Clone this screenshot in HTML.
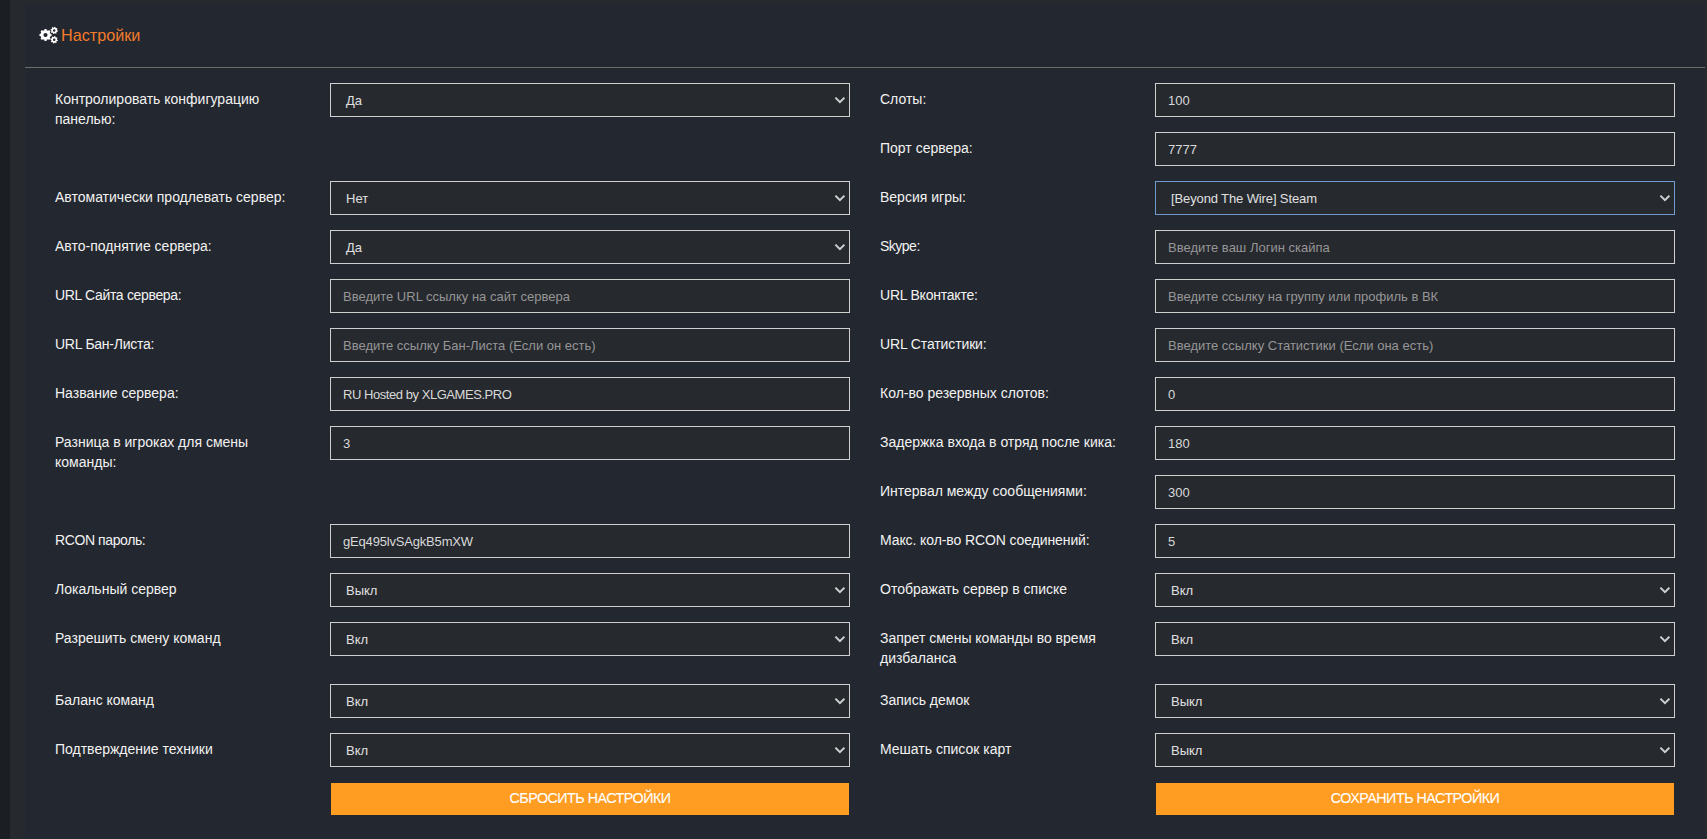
<!DOCTYPE html>
<html><head><meta charset="utf-8"><style>
html,body{margin:0;padding:0}
body{width:1707px;height:839px;background:#1b1e22;position:relative;overflow:hidden;font-family:"Liberation Sans",sans-serif}
.outer{position:absolute;left:10px;top:0;width:1697px;height:839px;background:#26292e}
.card{position:absolute;left:25px;top:5px;width:1680px;height:834px;background:#23272f}
.hr{position:absolute;left:25px;top:67px;width:1680px;height:1px;background:#6a6a6a}
.title{position:absolute;left:61px;top:26px;font-size:16.2px;line-height:18px;color:#f47b2b;white-space:nowrap}
.gear{position:absolute;left:36px;top:24px}
.lab{position:absolute;font-size:14px;line-height:20px;color:#f2f2f2;white-space:nowrap}
.ctl{position:absolute;width:518px;height:32px;border:1px solid #cfcfcf;background:#26292e;white-space:nowrap}
.ctl .t{position:absolute;top:9px;font-size:13px;line-height:16px}
.val .t{left:12px;color:#d9d9d9}
.ph .t{left:12px;color:#969696}
.sel .t{left:15px;color:#e0e0e0}
.focus{border-color:#6e9bcb}
.chev{position:absolute;left:503px;top:12px}
.btn{position:absolute;width:518px;height:32px;background:#ff9d22;color:#fff;font-size:14.3px;letter-spacing:-0.5px;line-height:30px;-webkit-text-stroke:0.1px #fff;text-align:center;white-space:nowrap}
</style></head><body>
<div class="outer"></div>
<div class="card"></div>
<div class="hr"></div>
<svg class="gear" width="26" height="22" viewBox="0 0 26 22"><path fill-rule="evenodd" fill="#fff" d="M14.35 9.79 L15.52 10.05 L15.52 11.95 L14.35 12.21 L13.79 13.57 L14.44 14.59 L13.09 15.94 L12.07 15.29 L10.71 15.85 L10.45 17.02 L8.55 17.02 L8.29 15.85 L6.93 15.29 L5.91 15.94 L4.56 14.59 L5.21 13.57 L4.65 12.21 L3.48 11.95 L3.48 10.05 L4.65 9.79 L5.21 8.43 L4.56 7.41 L5.91 6.06 L6.93 6.71 L8.29 6.15 L8.55 4.98 L10.45 4.98 L10.71 6.15 L12.07 6.71 L13.09 6.06 L14.44 7.41 L13.79 8.43ZM11.60 11.00 A2.1 2.1 0 1 0 7.40 11.00 A2.1 2.1 0 1 0 11.60 11.00ZM21.10 6.27 L21.90 6.56 L21.67 7.69 L20.82 7.65 L20.34 8.36 L20.70 9.13 L19.74 9.77 L19.17 9.13 L18.33 9.30 L18.04 10.10 L16.91 9.87 L16.95 9.02 L16.24 8.54 L15.47 8.90 L14.83 7.94 L15.47 7.37 L15.30 6.53 L14.50 6.24 L14.73 5.11 L15.58 5.15 L16.06 4.44 L15.70 3.67 L16.66 3.03 L17.23 3.67 L18.07 3.50 L18.36 2.70 L19.49 2.93 L19.45 3.78 L20.16 4.26 L20.93 3.90 L21.57 4.86 L20.93 5.43ZM19.45 6.40 A1.25 1.25 0 1 0 16.95 6.40 A1.25 1.25 0 1 0 19.45 6.40ZM21.10 15.67 L21.90 15.96 L21.67 17.09 L20.82 17.05 L20.34 17.76 L20.70 18.53 L19.74 19.17 L19.17 18.53 L18.33 18.70 L18.04 19.50 L16.91 19.27 L16.95 18.42 L16.24 17.94 L15.47 18.30 L14.83 17.34 L15.47 16.77 L15.30 15.93 L14.50 15.64 L14.73 14.51 L15.58 14.55 L16.06 13.84 L15.70 13.07 L16.66 12.43 L17.23 13.07 L18.07 12.90 L18.36 12.10 L19.49 12.33 L19.45 13.18 L20.16 13.66 L20.93 13.30 L21.57 14.26 L20.93 14.83ZM19.45 15.80 A1.25 1.25 0 1 0 16.95 15.80 A1.25 1.25 0 1 0 19.45 15.80Z"/></svg>
<div class="title">Настройки</div>
<div class="lab" style="left:55px;top:89px">Контролировать конфигурацию<br>панелью:</div><div class="ctl sel" style="left:330px;top:83px"><span class="t">Да</span><svg class="chev" width="11" height="8" viewBox="0 0 11 8"><path d="M1.4 1.6 L5.9 6.1 L10.4 1.6" fill="none" stroke="#cfcfcf" stroke-width="2"/></svg></div><div class="lab" style="left:55px;top:187px">Автоматически продлевать сервер:</div><div class="ctl sel" style="left:330px;top:181px"><span class="t">Нет</span><svg class="chev" width="11" height="8" viewBox="0 0 11 8"><path d="M1.4 1.6 L5.9 6.1 L10.4 1.6" fill="none" stroke="#cfcfcf" stroke-width="2"/></svg></div><div class="lab" style="left:55px;top:236px">Авто-поднятие сервера:</div><div class="ctl sel" style="left:330px;top:230px"><span class="t">Да</span><svg class="chev" width="11" height="8" viewBox="0 0 11 8"><path d="M1.4 1.6 L5.9 6.1 L10.4 1.6" fill="none" stroke="#cfcfcf" stroke-width="2"/></svg></div><div class="lab" style="left:55px;top:285px;letter-spacing:-0.33px">URL Сайта сервера:</div><div class="ctl ph" style="left:330px;top:279px"><span class="t">Введите URL ссылку на сайт сервера</span></div><div class="lab" style="left:55px;top:334px;letter-spacing:-0.25px">URL Бан-Листа:</div><div class="ctl ph" style="left:330px;top:328px"><span class="t">Введите ссылку Бан-Листа (Если он есть)</span></div><div class="lab" style="left:55px;top:383px">Название сервера:</div><div class="ctl val" style="left:330px;top:377px"><span class="t" style="letter-spacing:-0.45px">RU Hosted by XLGAMES.PRO</span></div><div class="lab" style="left:55px;top:432px">Разница в игроках для смены<br>команды:</div><div class="ctl val" style="left:330px;top:426px"><span class="t">3</span></div><div class="lab" style="left:55px;top:530px;letter-spacing:-0.4px">RCON пароль:</div><div class="ctl val" style="left:330px;top:524px"><span class="t" style="letter-spacing:-0.18px">gEq495lvSAgkB5mXW</span></div><div class="lab" style="left:55px;top:579px">Локальный сервер</div><div class="ctl sel" style="left:330px;top:573px"><span class="t">Выкл</span><svg class="chev" width="11" height="8" viewBox="0 0 11 8"><path d="M1.4 1.6 L5.9 6.1 L10.4 1.6" fill="none" stroke="#cfcfcf" stroke-width="2"/></svg></div><div class="lab" style="left:55px;top:628px">Разрешить смену команд</div><div class="ctl sel" style="left:330px;top:622px"><span class="t">Вкл</span><svg class="chev" width="11" height="8" viewBox="0 0 11 8"><path d="M1.4 1.6 L5.9 6.1 L10.4 1.6" fill="none" stroke="#cfcfcf" stroke-width="2"/></svg></div><div class="lab" style="left:55px;top:690px">Баланс команд</div><div class="ctl sel" style="left:330px;top:684px"><span class="t">Вкл</span><svg class="chev" width="11" height="8" viewBox="0 0 11 8"><path d="M1.4 1.6 L5.9 6.1 L10.4 1.6" fill="none" stroke="#cfcfcf" stroke-width="2"/></svg></div><div class="lab" style="left:55px;top:739px">Подтверждение техники</div><div class="ctl sel" style="left:330px;top:733px"><span class="t">Вкл</span><svg class="chev" width="11" height="8" viewBox="0 0 11 8"><path d="M1.4 1.6 L5.9 6.1 L10.4 1.6" fill="none" stroke="#cfcfcf" stroke-width="2"/></svg></div><div class="lab" style="left:880px;top:89px">Слоты:</div><div class="ctl val" style="left:1155px;top:83px"><span class="t">100</span></div><div class="lab" style="left:880px;top:138px">Порт сервера:</div><div class="ctl val" style="left:1155px;top:132px"><span class="t">7777</span></div><div class="lab" style="left:880px;top:187px">Версия игры:</div><div class="ctl sel focus" style="left:1155px;top:181px"><span class="t" style="letter-spacing:-0.12px">[Beyond The Wire] Steam</span><svg class="chev" width="11" height="8" viewBox="0 0 11 8"><path d="M1.4 1.6 L5.9 6.1 L10.4 1.6" fill="none" stroke="#cfcfcf" stroke-width="2"/></svg></div><div class="lab" style="left:880px;top:236px;letter-spacing:-0.5px">Skype:</div><div class="ctl ph" style="left:1155px;top:230px"><span class="t">Введите ваш Логин скайпа</span></div><div class="lab" style="left:880px;top:285px;letter-spacing:-0.22px">URL Вконтакте:</div><div class="ctl ph" style="left:1155px;top:279px"><span class="t">Введите ссылку на группу или профиль в ВК</span></div><div class="lab" style="left:880px;top:334px;letter-spacing:-0.13px">URL Статистики:</div><div class="ctl ph" style="left:1155px;top:328px"><span class="t">Введите ссылку Статистики (Если она есть)</span></div><div class="lab" style="left:880px;top:383px">Кол-во резервных слотов:</div><div class="ctl val" style="left:1155px;top:377px"><span class="t">0</span></div><div class="lab" style="left:880px;top:432px">Задержка входа в отряд после кика:</div><div class="ctl val" style="left:1155px;top:426px"><span class="t">180</span></div><div class="lab" style="left:880px;top:481px">Интервал между сообщениями:</div><div class="ctl val" style="left:1155px;top:475px"><span class="t">300</span></div><div class="lab" style="left:880px;top:530px;letter-spacing:-0.1px">Макс. кол-во RCON соединений:</div><div class="ctl val" style="left:1155px;top:524px"><span class="t">5</span></div><div class="lab" style="left:880px;top:579px">Отображать сервер в списке</div><div class="ctl sel" style="left:1155px;top:573px"><span class="t">Вкл</span><svg class="chev" width="11" height="8" viewBox="0 0 11 8"><path d="M1.4 1.6 L5.9 6.1 L10.4 1.6" fill="none" stroke="#cfcfcf" stroke-width="2"/></svg></div><div class="lab" style="left:880px;top:628px">Запрет смены команды во время<br>дизбаланса</div><div class="ctl sel" style="left:1155px;top:622px"><span class="t">Вкл</span><svg class="chev" width="11" height="8" viewBox="0 0 11 8"><path d="M1.4 1.6 L5.9 6.1 L10.4 1.6" fill="none" stroke="#cfcfcf" stroke-width="2"/></svg></div><div class="lab" style="left:880px;top:690px">Запись демок</div><div class="ctl sel" style="left:1155px;top:684px"><span class="t">Выкл</span><svg class="chev" width="11" height="8" viewBox="0 0 11 8"><path d="M1.4 1.6 L5.9 6.1 L10.4 1.6" fill="none" stroke="#cfcfcf" stroke-width="2"/></svg></div><div class="lab" style="left:880px;top:739px">Мешать список карт</div><div class="ctl sel" style="left:1155px;top:733px"><span class="t">Выкл</span><svg class="chev" width="11" height="8" viewBox="0 0 11 8"><path d="M1.4 1.6 L5.9 6.1 L10.4 1.6" fill="none" stroke="#cfcfcf" stroke-width="2"/></svg></div><div class="btn" style="left:331px;top:783px">СБРОСИТЬ НАСТРОЙКИ</div><div class="btn" style="left:1156px;top:783px">СОХРАНИТЬ НАСТРОЙКИ</div>
</body></html>
